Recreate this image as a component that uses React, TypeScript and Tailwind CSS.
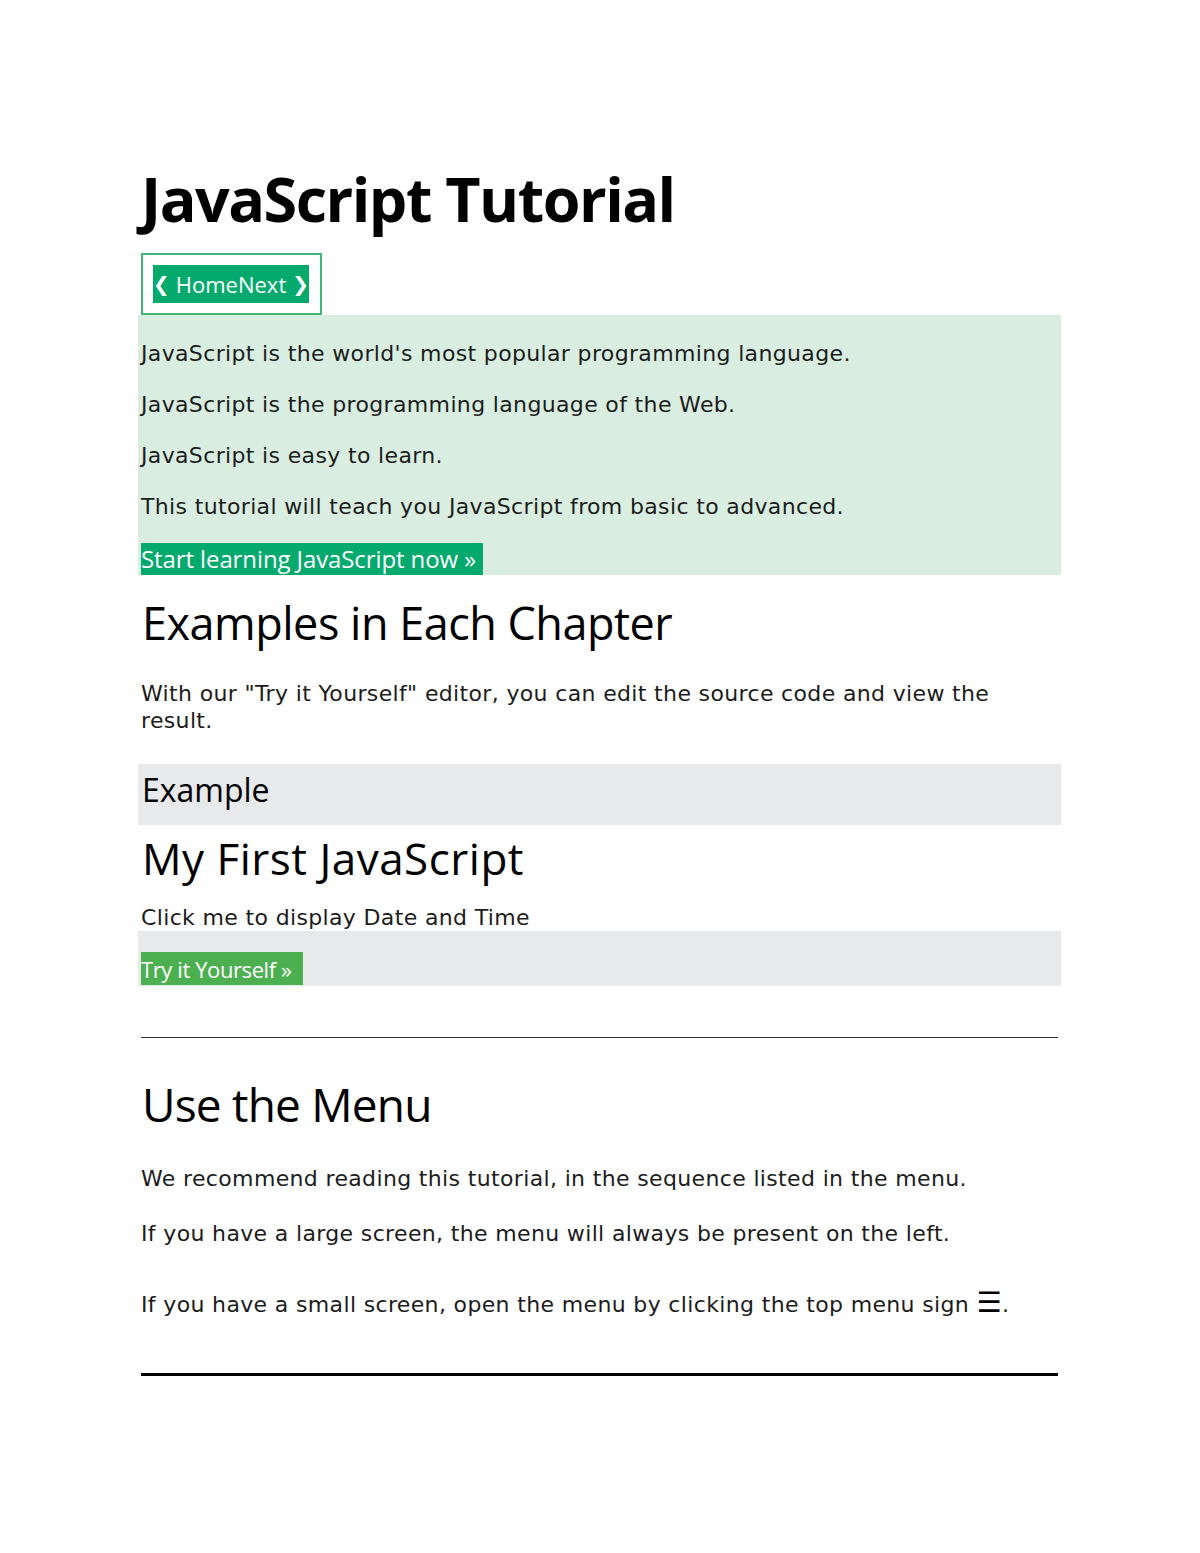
import React from "react";

const para =
  "pl-[3px] font-['DejaVu_Sans',Verdana,sans-serif] text-[22px] tracking-[0.35px] text-[#1c1c1c]";

export default function App() {
  return (
    <div className="min-h-[1553px] w-[1200px] bg-white text-black">
      <div className="ml-[138px] w-[923px] pt-[168px]">
        <h1 className="pl-[3px] font-['Open_Sans',sans-serif] text-[61px] font-bold leading-[62px] tracking-[-1.5px] text-black">
          JavaScript Tutorial
        </h1>

        <div className="ml-[3px] mt-[23px] flex w-fit border-2 border-[#3cb878] p-[10px] pr-[11px]">
          <div className="flex h-[38px] w-[156px] items-center justify-center bg-[#04AA6D] font-['Open_Sans',sans-serif] text-[22px] leading-none text-white">
            <span className="font-['DejaVu_Sans',sans-serif] text-[20px] font-bold">❮</span>
            <span className="ml-[6px]">HomeNext</span>
            <span className="ml-[6px] font-['DejaVu_Sans',sans-serif] text-[20px] font-bold">❯</span>
          </div>
        </div>

        <div className="flex flex-col bg-[#D9EEE1] pt-[13px]">
          <p className={`${para} leading-[51px]`}>
            JavaScript is the world's most popular programming language.
          </p>
          <p className={`${para} leading-[51px]`}>
            JavaScript is the programming language of the Web.
          </p>
          <p className={`${para} leading-[51px]`}>JavaScript is easy to learn.</p>
          <p className={`${para} leading-[51px]`}>
            This tutorial will teach you JavaScript from basic to advanced.
          </p>
          <div className="ml-[3px] mt-[11px] flex h-[32px] w-[342px] items-center whitespace-nowrap bg-[#04AA6D] font-['Open_Sans',sans-serif] text-[24px] leading-none tracking-[-0.1px] text-white">
            Start learning JavaScript now »
          </div>
        </div>

        <h2 className="mt-[25px] pl-[4px] font-['Open_Sans',sans-serif] text-[45px] font-normal leading-[45px] tracking-[-0.5px] text-black">
          Examples in Each Chapter
        </h2>

        <p className={`mt-[35px] ${para} leading-[27px]`}>
          With our "Try it Yourself" editor, you can edit the source code and view the result.
        </p>

        <div className="mt-[30px] h-[61px] bg-[#E7E9EB] pl-[4px] pt-[10px]">
          <h3 className="font-['Open_Sans',sans-serif] text-[32px] font-normal leading-[32px] text-black">
            Example
          </h3>
        </div>

        <h2 className="mt-[11px] pl-[4px] font-['Open_Sans',sans-serif] text-[44px] font-normal leading-[44px] tracking-[0.5px] text-black">
          My First JavaScript
        </h2>

        <p className={`mt-[24px] ${para} leading-[27px]`}>Click me to display Date and Time</p>

        <div className="flex h-[55px] items-start bg-[#E7E9EB] pl-[3px] pt-[21px]">
          <div className="flex h-[33px] w-[162px] items-center whitespace-nowrap bg-[#4CAF50] font-['Open_Sans',sans-serif] text-[22px] leading-none tracking-[-0.4px] text-white">
            Try it Yourself »
          </div>
        </div>

        <hr className="mx-[3px] mt-[51px] border-0 border-t border-[#333]" />

        <h2 className="mt-[43px] pl-[4px] font-['Open_Sans',sans-serif] text-[46px] font-normal leading-[46px] tracking-[-0.8px] text-black">
          Use the Menu
        </h2>

        <p className={`mt-[38px] ${para} leading-[27px]`}>
          We recommend reading this tutorial, in the sequence listed in the menu.
        </p>
        <p className={`mt-[28px] ${para} leading-[27px]`}>
          If you have a large screen, the menu will always be present on the left.
        </p>
        <p className={`mt-[44px] ${para} leading-[27px]`}>
          If you have a small screen, open the menu by clicking the top menu sign{" "}
          <span className="inline-block align-baseline text-[28px] font-bold leading-[0] text-black">☰</span>.
        </p>

        <hr className="mx-[3px] mt-[55px] border-0 border-t-[3px] border-black" />
      </div>
    </div>
  );
}
